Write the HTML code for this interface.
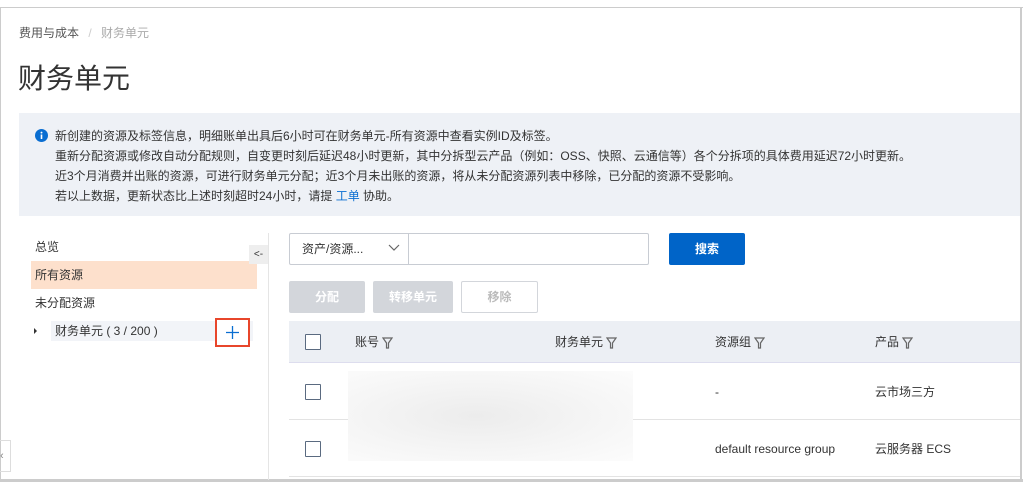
<!DOCTYPE html><html><head><meta charset="utf-8"><style>
*{margin:0;padding:0;box-sizing:border-box}
body{width:1023px;height:482px;overflow:hidden;background:#fff;font-family:"Liberation Sans","Noto Sans CJK SC",sans-serif;color:#333;position:relative;font-size:12px}
.a{position:absolute;white-space:nowrap;line-height:16px}
.cb{position:absolute;width:16px;height:16px;border:1px solid #5a6a80;border-radius:1px;background:#fff}
.flt{display:inline-block;vertical-align:middle;margin-left:3px}
</style></head><body>
<div class="a" style="left:0;top:0;width:1023px;height:8px;background:#fff;border-bottom:1px solid #ccc"></div>
<div class="a" style="left:0;top:7px;width:1px;height:475px;background:#ccc"></div>
<div class="a" style="left:1020px;top:7px;width:2px;height:475px;background:#ccc"></div>
<div class="a" style="left:0;top:479px;width:1023px;height:3px;background:#ccc"></div>
<div class="a" style="left:19px;top:25px;font-size:12px;color:#555">费用与成本 <span style="color:#ccc;margin:0 6px">/</span> <span style="color:#aaa">财务单元</span></div>
<div class="a" style="left:18px;top:64px;font-size:28px;line-height:30px;color:#333">财务单元</div>
<div class="a" style="left:19px;top:113px;width:1001px;height:103px;background:#eef1f6"></div>
<svg class="a" style="left:35px;top:129px" width="13" height="13" viewBox="0 0 13 13"><circle cx="6.5" cy="6.5" r="6.5" fill="#0a6ed1"/><rect x="5.7" y="5.5" width="1.6" height="4.5" fill="#fff"/><circle cx="6.5" cy="3.6" r="0.95" fill="#fff"/></svg>
<div class="a" style="left:55px;top:126px;line-height:20px;font-size:12px;color:#333">新创建的资源及标签信息，明细账单出具后6小时可在财务单元-所有资源中查看实例ID及标签。<br>重新分配资源或修改自动分配规则，自变更时刻后延迟48小时更新，其中分拆型云产品（例如：OSS、快照、云通信等）各个分拆项的具体费用延迟72小时更新。<br>近3个月消费并出账的资源，可进行财务单元分配；近3个月未出账的资源，将从未分配资源列表中移除，已分配的资源不受影响。<br>若以上数据，更新状态比上述时刻超时24小时，请提 <span style="color:#0a6ed1">工单</span> 协助。</div>
<div class="a" style="left:35px;top:239px">总览</div>
<div class="a" style="left:31px;top:261px;width:226px;height:28px;background:#fde0cc"></div>
<div class="a" style="left:35px;top:267px">所有资源</div>
<div class="a" style="left:35px;top:295px">未分配资源</div>
<div class="a" style="left:34px;top:328px;width:0;height:0;border-left:3px solid #333;border-top:3px solid transparent;border-bottom:3px solid transparent"></div>
<div class="a" style="left:51px;top:321px;width:202px;height:20px;background:#f2f4f8"></div>
<div class="a" style="left:55px;top:323px;color:#333">财务单元 ( 3 / 200 )</div>
<div class="a" style="left:215px;top:318px;width:35px;height:29px;border:2px solid #e8462b;background:#fff"></div>
<svg class="a" style="left:225px;top:325px" width="15" height="15"><path d="M7.5 1v13M1 7.5h13" stroke="#0a6ed1" stroke-width="1.3"/></svg>
<div class="a" style="left:249px;top:245px;width:19px;height:19px;background:#eee;font-size:10px;text-align:center;line-height:19px">&lt;-</div>
<div class="a" style="left:268px;top:233px;width:1px;height:247px;background:#e5e5e5"></div>
<div class="a" style="left:0;top:440px;width:11px;height:32px;border:1px solid #ddd;border-left:none;font-size:11px;color:#888;line-height:30px">‹</div>
<div class="a" style="left:289px;top:233px;width:360px;height:32px;border:1px solid #c8ccd3;border-radius:2px"></div>
<div class="a" style="left:408px;top:233px;width:1px;height:32px;background:#c8ccd3"></div>
<div class="a" style="left:302px;top:241px">资产/资源...</div>
<svg class="a" style="left:388px;top:244px" width="12" height="8"><path d="M1 1l5 5 5-5" fill="none" stroke="#666" stroke-width="1.2"/></svg>
<div class="a" style="left:669px;top:233px;width:76px;height:32px;background:#0064c8;border-radius:2px;color:#fff;font-weight:bold;text-align:center;line-height:32px">搜索</div>
<div class="a" style="left:289px;top:281px;width:76px;height:32px;background:#d3d6db;border-radius:2px;color:#fff;font-weight:bold;text-align:center;line-height:32px">分配</div>
<div class="a" style="left:373px;top:281px;width:80px;height:32px;background:#d3d6db;border-radius:2px;color:#fff;font-weight:bold;text-align:center;line-height:32px">转移单元</div>
<div class="a" style="left:461px;top:281px;width:77px;height:32px;border:1px solid #d3d6db;border-radius:2px;color:#bbb;font-weight:bold;text-align:center;line-height:30px">移除</div>
<div class="a" style="left:289px;top:321px;width:731px;height:42px;background:#eceff4;border-bottom:1px solid #dde"></div>
<div class="cb" style="left:305px;top:334px"></div>
<div class="cb" style="left:305px;top:384px"></div>
<div class="cb" style="left:305px;top:441px"></div>
<div class="a" style="left:289px;top:419px;width:731px;height:1px;background:#e3e3e3"></div>
<div class="a" style="left:289px;top:476px;width:731px;height:1px;background:#e3e3e3"></div>
<div class="a" style="left:348px;top:371px;width:285px;height:90px;background:radial-gradient(ellipse at 45% 50%,#ececec,#f6f6f6 60%,#fcfcfc)"></div>
<div class="a" style="left:355px;top:334px">账号<svg class="flt" width="11" height="12"><path d="M1 1h9L6.5 6v5h-2V6z" fill="none" stroke="#666" stroke-width="1.2"/></svg></div>
<div class="a" style="left:555px;top:334px">财务单元<svg class="flt" width="11" height="12"><path d="M1 1h9L6.5 6v5h-2V6z" fill="none" stroke="#666" stroke-width="1.2"/></svg></div>
<div class="a" style="left:715px;top:334px">资源组<svg class="flt" width="11" height="12"><path d="M1 1h9L6.5 6v5h-2V6z" fill="none" stroke="#666" stroke-width="1.2"/></svg></div>
<div class="a" style="left:875px;top:334px">产品<svg class="flt" width="11" height="12"><path d="M1 1h9L6.5 6v5h-2V6z" fill="none" stroke="#666" stroke-width="1.2"/></svg></div>
<div class="a" style="left:715px;top:384px">-</div>
<div class="a" style="left:875px;top:384px">云市场三方</div>
<div class="a" style="left:715px;top:441px">default resource group</div>
<div class="a" style="left:875px;top:441px">云服务器 ECS</div>
</body></html>
